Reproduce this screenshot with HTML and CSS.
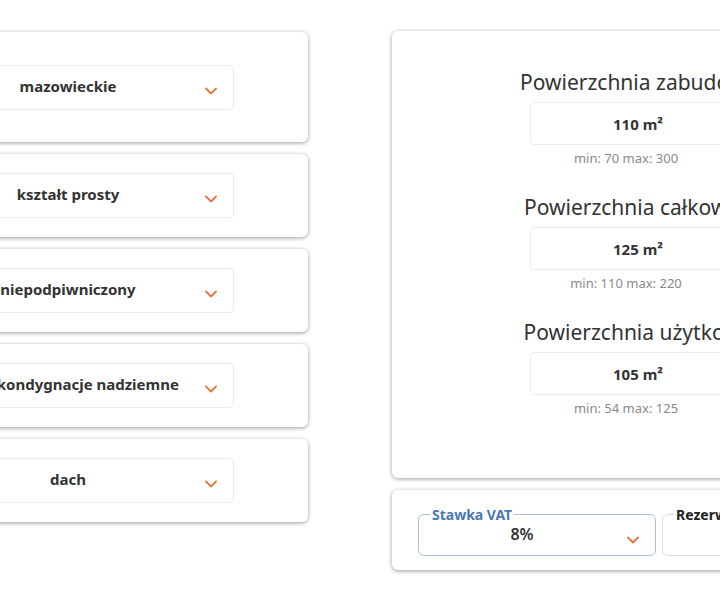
FILE: index.html
```html
<!DOCTYPE html>
<html lang="pl">
<head>
    <meta charset="UTF-8">
    <meta name="viewport" content="width=device-width, initial-scale=1.0">
    <title>Kalkulator budowy</title>
    <link rel="stylesheet" href="styles.css">
</head>
<body>
    <div class="page">
        <div class="left-col">
            <div class="card card-first">
                <div class="select">
                    <span class="select-text">mazowieckie</span>
                    <svg class="chevron" width="12" height="8" viewBox="0 0 12 8"><polyline points="1,1.5 6,6.5 11,1.5"/></svg>
                </div>
            </div>
            <div class="card">
                <div class="select">
                    <span class="select-text">kształt prosty</span>
                    <svg class="chevron" width="12" height="8" viewBox="0 0 12 8"><polyline points="1,1.5 6,6.5 11,1.5"/></svg>
                </div>
            </div>
            <div class="card">
                <div class="select">
                    <span class="select-text">niepodpiwniczony</span>
                    <svg class="chevron" width="12" height="8" viewBox="0 0 12 8"><polyline points="1,1.5 6,6.5 11,1.5"/></svg>
                </div>
            </div>
            <div class="card">
                <div class="select">
                    <span class="select-text">dwie kondygnacje nadziemne</span>
                    <svg class="chevron" width="12" height="8" viewBox="0 0 12 8"><polyline points="1,1.5 6,6.5 11,1.5"/></svg>
                </div>
            </div>
            <div class="card">
                <div class="select">
                    <span class="select-text">dach</span>
                    <svg class="chevron" width="12" height="8" viewBox="0 0 12 8"><polyline points="1,1.5 6,6.5 11,1.5"/></svg>
                </div>
            </div>
        </div>

        <div class="right-col">
            <div class="card area-card">
                <div class="area">
                    <h3 class="area-title">Powierzchnia zabudowy</h3>
                    <div class="area-value">110 m²</div>
                    <div class="area-range">min: 70 max: 300</div>
                </div>
                <div class="area">
                    <h3 class="area-title">Powierzchnia całkowita</h3>
                    <div class="area-value">125 m²</div>
                    <div class="area-range">min: 110 max: 220</div>
                </div>
                <div class="area">
                    <h3 class="area-title">Powierzchnia użytkowa</h3>
                    <div class="area-value">105 m²</div>
                    <div class="area-range">min: 54 max: 125</div>
                </div>
            </div>

            <div class="card vat-card">
                <fieldset class="field field-active">
                    <legend>Stawka VAT</legend>
                    <div class="field-value">8%</div>
                    <svg class="chevron" width="12" height="8" viewBox="0 0 12 8"><polyline points="1,1.5 6,6.5 11,1.5"/></svg>
                </fieldset>
                <fieldset class="field">
                    <legend>Rezerwa</legend>
                    <div class="field-value">10%</div>
                </fieldset>
            </div>
        </div>
    </div>
</body>
</html>
```

FILE: styles.css
```css
html, body {
    margin: 0;
    background-color: #ffffff;
}
body {
    font-family: 'Noto Sans', 'Open Sans', sans-serif;
    color: #333333;
    width: 720px;
    height: 600px;
    overflow: hidden;
}
.page {
    display: flex;
    align-items: flex-start;
    gap: 84px;
    margin-left: -172px;
}
.card {
    background-color: #ffffff;
    border-radius: 6px;
    box-shadow: 0 1px 4px rgba(0, 0, 0, 0.4);
}

/* left column */
.left-col {
    width: 480px;
    flex-shrink: 0;
    display: flex;
    flex-direction: column;
    gap: 12px;
    padding-top: 32px;
}
.left-col .card {
    padding: 19px 74px;
}
.left-col .card-first {
    padding: 33px 74px 32px;
}
.select {
    position: relative;
    height: 45px;
    padding-bottom: 3px;
    display: flex;
    align-items: center;
    justify-content: center;
    border: 1px solid #ececec;
    border-radius: 4px;
    box-sizing: border-box;
    font-size: 15px;
    font-weight: 700;
    color: #333333;
    white-space: nowrap;
}
.chevron {
    fill: none;
    stroke: #e2763f;
    stroke-width: 1.8;
    stroke-linecap: round;
    stroke-linejoin: round;
}
.select .chevron {
    position: absolute;
    right: 16px;
    top: 21px;
}

/* right column */
.right-col {
    width: 492px;
    flex-shrink: 0;
    display: flex;
    flex-direction: column;
    gap: 12px;
    padding-top: 31px;
}
.area-card {
    padding: 39px 0 61px;
    display: flex;
    flex-direction: column;
    gap: 28px;
}
.area {
    display: flex;
    flex-direction: column;
    align-items: center;
}
.area-title {
    margin: 0;
    font-size: 21px;
    font-weight: 400;
    line-height: 25px;
    color: #333333;
    white-space: nowrap;
}
.area-value {
    margin-top: 7px;
    width: 216px;
    height: 43px;
    box-sizing: border-box;
    border: 1px solid #ececec;
    border-radius: 4px;
    display: flex;
    align-items: center;
    justify-content: center;
    font-size: 15px;
    font-weight: 700;
}
.area-range {
    margin-top: 4px;
    margin-right: 24px;
    font-size: 13px;
    line-height: 18px;
    color: #8a8a8a;
}

.vat-card {
    display: flex;
    gap: 6px;
    padding: 15px 26px 14px;
}
.field {
    position: relative;
    flex-shrink: 0;
    margin: 0;
    width: 238px;
    height: 51px;
    box-sizing: border-box;
    padding: 0 40px 0 10px;
    border: 1px solid #dedede;
    border-radius: 6px;
}
.field legend {
    padding: 0 2px;
    margin-left: 1px;
    font-size: 14px;
    font-weight: 700;
    line-height: 19px;
    color: #222222;
}
.field-active {
    border-color: #a7bfd8;
}
.field-active legend {
    color: #4a78b3;
}
.field-value {
    text-align: center;
    font-size: 16px;
    font-weight: 600;
    line-height: 22px;
    margin-top: -1px;
}
.field:not(.field-active) .field-value {
    visibility: hidden;
}
.field .chevron {
    position: absolute;
    right: 16px;
    top: 12px;
}
```
